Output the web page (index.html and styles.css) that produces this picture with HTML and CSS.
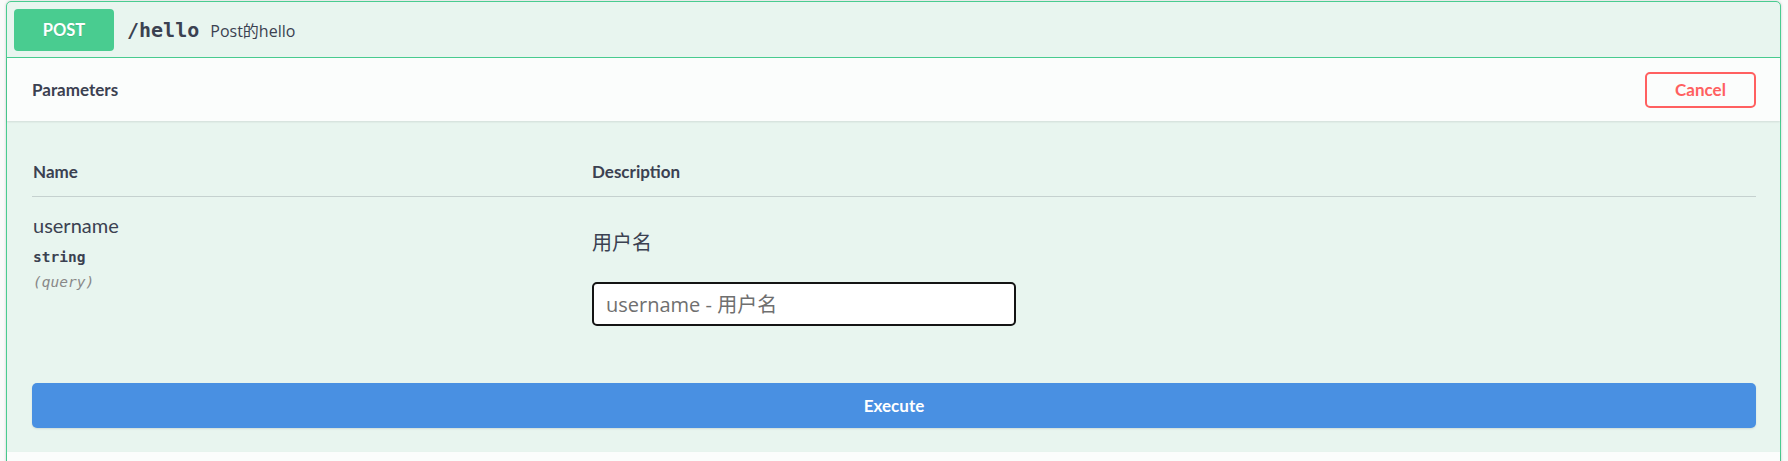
FILE: index.html
```html
<!DOCTYPE html>
<html lang="zh-CN">
<head>
<meta charset="utf-8">
<title>POST /hello</title>
<link rel="stylesheet" href="styles.css">
</head>
<body>
<div class="page">
  <div class="opblock">
    <div class="summary">
      <span class="method">POST</span>
      <span class="path">/hello</span>
      <span class="summary-desc">Post的hello</span>
    </div>
    <div class="section-header">
      <h4 class="section-title">Parameters</h4>
      <button class="btn-cancel" type="button">Cancel</button>
    </div>
    <div class="params">
      <div class="params-head">
        <div class="col-name">Name</div>
        <div class="col-desc">Description</div>
      </div>
      <div class="param-row">
        <div class="col-name">
          <div class="param-name">username</div>
          <div class="param-type">string</div>
          <div class="param-in">(query)</div>
        </div>
        <div class="col-desc desc-cell">
          <p class="param-text">用户名</p>
          <input class="param-input" type="text" placeholder="username - 用户名">
        </div>
      </div>
    </div>
    <div class="execute-wrapper">
      <button class="btn-execute" type="button">Execute</button>
    </div>
    <div class="section-header section-next"></div>
  </div>
</div>
</body>
</html>
```
FILE: styles.css
```css
html, body {
  margin: 0;
  padding: 0;
  background: #fafafa;
}
body {
  font-family: "Open Sans", "Noto Sans CJK SC", sans-serif;
  color: #3b4151;
  overflow: hidden;
}
.page {
  padding: 1px 7px 0 6px;
}
.opblock {
  border: 1px solid #49cc90;
  border-radius: 5px;
  background: #e8f5ef;
  box-shadow: 0 0 3px rgba(0, 0, 0, 0.19);
}
.summary {
  display: flex;
  align-items: center;
  padding: 7px 7px 6px;
  border-bottom: 1px solid #49cc90;
}
.method {
  width: 100px;
  height: 42px;
  display: flex;
  align-items: center;
  justify-content: center;
  background: #49cc90;
  border-radius: 4px;
  color: #fff;
  font-family: Lato, "Noto Sans", sans-serif;
  font-weight: 700;
  font-size: 16.5px;
  text-shadow: 0 1px 0 rgba(0, 0, 0, 0.1);
}
.path {
  margin-left: 13px;
  font-family: "DejaVu Sans Mono", monospace;
  font-weight: 700;
  font-size: 20px;
  color: #3b4151;
}
.summary-desc {
  margin-left: 11px;
  font-family: "Open Sans", "Noto Sans CJK SC", sans-serif;
  font-size: 16px;
  color: #3b4151;
}
.section-header {
  display: flex;
  align-items: center;
  justify-content: space-between;
  min-height: 63px;
  padding: 0 24px 0 25px;
  background: rgba(255, 255, 255, 0.8);
  box-shadow: 0 1px 2px rgba(0, 0, 0, 0.1);
}
.section-title {
  margin: 0;
  font-family: Lato, "Noto Sans", sans-serif;
  font-weight: 700;
  font-size: 17px;
  color: #3b4151;
}
.btn-cancel {
  width: 111px;
  height: 36px;
  border: 2px solid #ff6060;
  border-radius: 5px;
  background: transparent;
  color: #ff6060;
  font-family: Lato, "Noto Sans", sans-serif;
  font-weight: 700;
  font-size: 17px;
  padding: 0;
}
.params {
  padding: 26px 24px 0 25px;
}
.params-head {
  display: flex;
  align-items: center;
  height: 49px;
  border-bottom: 1px solid rgba(59, 65, 81, 0.2);
  font-family: Lato, "Noto Sans", sans-serif;
  font-weight: 700;
  font-size: 17px;
  color: #3b4151;
}
.col-name {
  box-sizing: border-box;
  width: 560px;
  flex-shrink: 0;
  padding-left: 1px;
}
.col-desc {
  flex: 1;
}
.param-row {
  display: flex;
}
.param-row .col-name {
  padding-top: 15px;
}
.param-name {
  font-family: Lato, "Noto Sans", sans-serif;
  font-size: 20px;
  line-height: 26px;
  color: #3b4151;
}
.param-type {
  margin-top: 10px;
  font-family: "DejaVu Sans Mono", monospace;
  font-weight: 700;
  font-size: 14.5px;
  line-height: 18px;
  color: #3b4151;
}
.param-in {
  margin-top: 7px;
  font-family: "DejaVu Sans Mono", monospace;
  font-style: italic;
  font-size: 14.5px;
  line-height: 18px;
  color: #888;
}
.desc-cell {
  padding-top: 32px;
}
.param-text {
  margin: 0;
  font-family: "Open Sans", "Noto Sans CJK SC", sans-serif;
  font-size: 20px;
  line-height: 28px;
  color: #3b4151;
}
.param-input {
  display: block;
  box-sizing: border-box;
  margin-top: 25px;
  width: 424px;
  height: 44px;
  padding: 0 12px;
  border: 2px solid #141414;
  border-radius: 5px;
  background: #fff;
  font-family: "Open Sans", "Noto Sans CJK SC", sans-serif;
  font-size: 20px;
  color: #3b4151;
  outline: none;
}
.param-input::placeholder {
  color: #6f6f6f;
}
.execute-wrapper {
  padding: 57px 24px 24px 25px;
}
.btn-execute {
  display: block;
  width: 100%;
  height: 45px;
  border: none;
  border-radius: 5px;
  background: #4990e2;
  color: #fff;
  font-family: Lato, "Noto Sans", sans-serif;
  font-weight: 700;
  font-size: 17px;
  box-shadow: 0 1px 2px rgba(0, 0, 0, 0.1);
}
```
